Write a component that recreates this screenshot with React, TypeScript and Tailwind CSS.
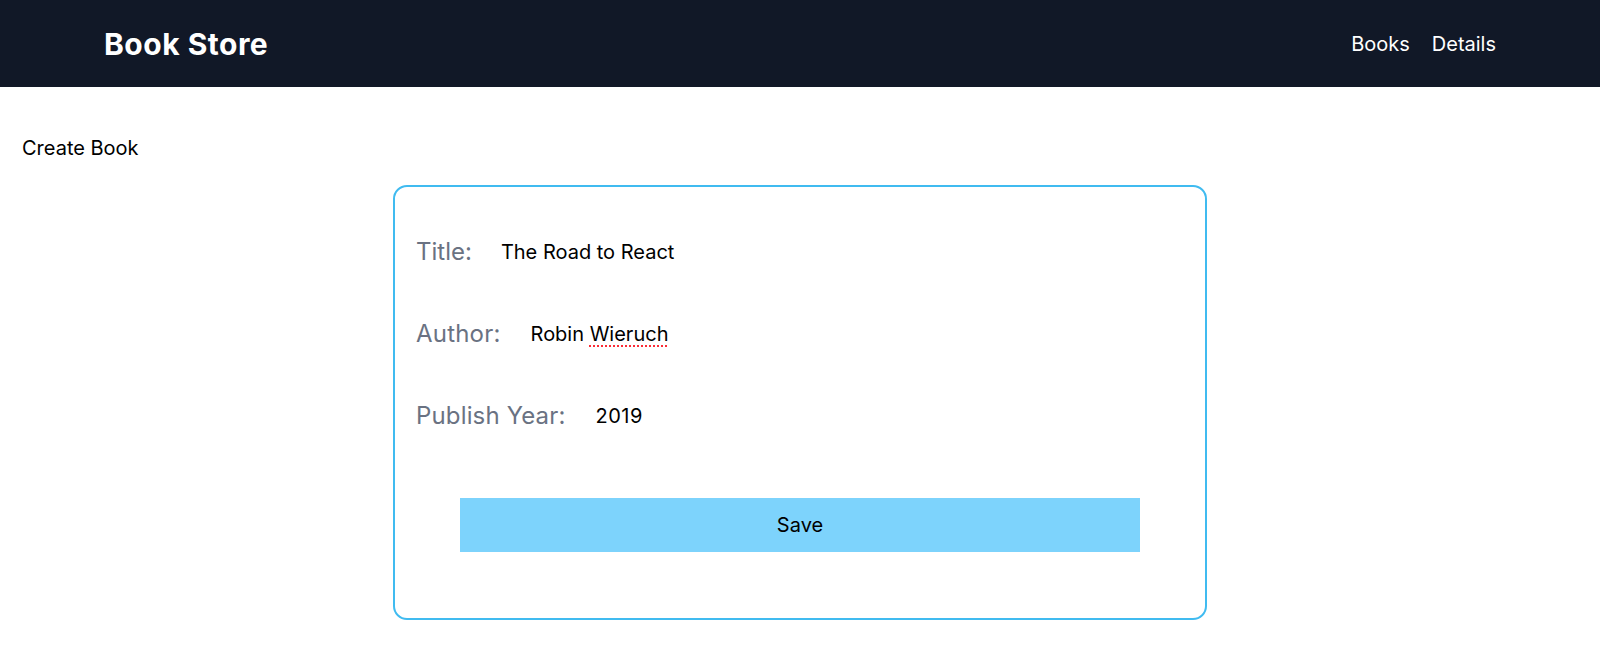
import React from "react";

export default function App() {
  const font = { fontFamily: "Inter, 'Liberation Sans', sans-serif" };
  return (
    <div className="min-h-screen bg-white text-black" style={font}>
      <header className="h-[87px] bg-[#111827] flex items-center justify-between px-[104px]">
        <div className="text-[30px] leading-9 font-bold text-white tracking-[0.5px]">Book Store</div>
        <nav className="flex items-center gap-[22px] text-xl text-white">
          <span>Books</span>
          <span>Details</span>
        </nav>
      </header>
      <main className="pt-[47px] px-[22px]">
        <h1 className="text-xl leading-7">Create Book</h1>
        <div className="mx-auto mt-[23px] w-[814px] border-2 border-[#40bbf0] rounded-[14px] pt-[49px] px-[21px] pb-[66px]">
          <div className="flex flex-col gap-[50px]">
            <div className="flex items-center h-8 gap-[29px]">
              <span className="text-2xl text-gray-500">Title:</span>
              <span className="text-xl">The Road to React</span>
            </div>
            <div className="flex items-center h-8 gap-[30px]">
              <span className="text-2xl text-gray-500 tracking-[0.2px]">Author:</span>
              <span className="text-xl">
                Robin{" "}
                <span className="underline decoration-dotted decoration-red-500 decoration-2 underline-offset-4">Wieruch</span>
              </span>
            </div>
            <div className="flex items-center h-8 gap-[30px]">
              <span className="text-2xl text-gray-500 tracking-[0.15px]">Publish Year:</span>
              <span className="text-xl tracking-[0.5px]">2019</span>
            </div>
          </div>
          <button className="mt-[66px] mx-auto block w-[680px] h-[54px] bg-[#7dd3fc] text-xl text-black">Save</button>
        </div>
      </main>
    </div>
  );
}
